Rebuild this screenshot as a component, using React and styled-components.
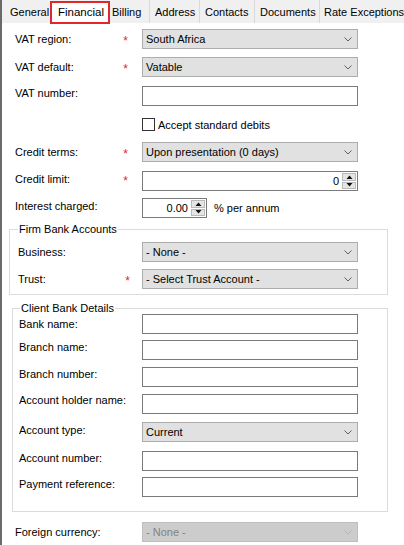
import React from 'react';
import styled, { createGlobalStyle } from 'styled-components';

const GlobalStyle = createGlobalStyle`
  html, body { margin: 0; padding: 0; background: #ffffff; }
  body {
    font-family: "Liberation Sans", Arial, sans-serif;
    font-size: 11px;
    color: #000000;
  }
  * { box-sizing: border-box; }
`;

const Page = styled.div`
  width: 404px;
  height: 545px;
  border-left: 2px solid #6a6a6a;
  background: #ffffff;
  overflow: hidden;
`;

const TabBar = styled.div`
  display: flex;
  height: 23px;
  padding-left: 6px;
  background: #f0f0f0;
`;

const Tab = styled.div`
  flex: none;
  width: ${p => p.$w}px;
  height: 23px;
  margin-top: ${p => (p.$active ? 1 : 0)}px;
  padding-left: ${p => p.$pl}px;
  line-height: ${p => (p.$active ? 18 : 25)}px;
  white-space: nowrap;
  background: ${p => (p.$active ? '#ffffff' : '#f0f0f0')};
  border: ${p => (p.$active ? '2px solid #e2262c' : 'none')};
  border-left: ${p => (p.$active ? '2px solid #e2262c' : p.$sep ? '1px solid #d9d9d9' : 'none')};
  font-size: ${p => (p.$active ? 11.5 : 11)}px;
`;

const Form = styled.div`
  display: flex;
  flex-direction: column;
  width: 356px;
  padding-left: 13px;
`;

const Row = styled.div`
  display: grid;
  grid-template-columns: 1fr 216px;
  align-items: center;
  height: ${p => p.$h || 20}px;
  margin-top: ${p => p.$mt}px;
`;

const LabelCell = styled.div`
  display: flex;
  align-items: center;
  justify-content: space-between;
  white-space: nowrap;
  position: relative;
  top: ${p => p.$shift || 0}px;
`;

const Star = styled.span`
  color: #e8252b;
  font-size: 12px;
  line-height: 12px;
  margin-right: ${p => p.$mr || 14}px;
  transform: translateY(2px);
`;

const Select = styled.div`
  display: flex;
  align-items: center;
  justify-content: space-between;
  height: 20px;
  padding: 0 5px 0 3px;
  border: 1px solid ${p => (p.$disabled ? '#bfbfbf' : '#adadad')};
  background: ${p => (p.$disabled ? '#cccccc' : '#e1e1e1')};
  color: ${p => (p.$disabled ? '#838383' : '#000000')};
  white-space: nowrap;
`;

const TextBox = styled.div`
  display: flex;
  align-items: center;
  justify-content: flex-end;
  width: ${p => (p.$w ? `${p.$w}px` : '100%')};
  height: 20px;
  padding: 0 1px 0 3px;
  border: 1px solid #7a7a7a;
  background: #ffffff;
`;

const NumValue = styled.span`
  margin-right: 3px;
`;

const Spin = styled.div`
  display: flex;
  flex-direction: column;
  gap: 1px;
  width: 14px;
  height: 16px;
`;

const SpinButton = styled.div`
  display: flex;
  align-items: center;
  justify-content: center;
  flex: 1;
  background: #e5e5e5;
  border: 1px solid #b9b9b9;
`;

const Inline = styled.div`
  display: flex;
  align-items: center;
  gap: ${p => p.$gap || 3}px;
  white-space: nowrap;
`;

const CheckBox = styled.span`
  display: inline-block;
  width: 13px;
  height: 13px;
  border: 1px solid #333333;
  background: #ffffff;
`;

const Group = styled.fieldset`
  margin: ${p => p.$mt}px 0 0 ${p => p.$ml}px;
  width: ${p => p.$w}px;
  padding: ${p => p.$pt}px 29px ${p => p.$pb}px ${p => p.$pl}px;
  border: 1px solid #dcdcdc;
  min-width: 0;
`;

const Legend = styled.legend`
  padding: 0 1px;
  margin-left: ${p => p.$ml}px;
  line-height: 12px;
  font-size: 11px;
`;

const Chevron = ({ color = '#606060' }) => (
  <svg width="8" height="5" viewBox="0 0 8 5">
    <polyline points="0.5,0.5 4,4 7.5,0.5" fill="none" stroke={color} strokeWidth="1" />
  </svg>
);

const Arrow = ({ up }) => (
  <svg width="7" height="4" viewBox="0 0 7 4">
    <polygon points={up ? '0.5,4 3.5,0.5 6.5,4' : '0.5,0 3.5,3.5 6.5,0'} fill="#111" />
  </svg>
);

const Spinner = () => (
  <Spin>
    <SpinButton><Arrow up /></SpinButton>
    <SpinButton><Arrow /></SpinButton>
  </Spin>
);

const Field = ({ label, req, mr, mt, h, shift, children }) => (
  <Row $mt={mt} $h={h}>
    <LabelCell $shift={shift}>
      <span>{label}</span>
      {req && <Star $mr={mr}>*</Star>}
    </LabelCell>
    {children}
  </Row>
);

const Drop = ({ value, disabled }) => (
  <Select $disabled={disabled}>
    <span>{value}</span>
    <Chevron color={disabled ? '#b5b5b5' : '#606060'} />
  </Select>
);

const tabs = [
  { t: 'General', w: 42, pl: 2 },
  { t: 'Financial', w: 60, pl: 6, active: true },
  { t: 'Billing', w: 39, pl: 2 },
  { t: 'Address', w: 50, pl: 5, sep: true },
  { t: 'Contacts', w: 55, pl: 5, sep: true },
  { t: 'Documents', w: 65, pl: 5, sep: true },
  { t: 'Rate Exceptions', w: 85, pl: 4, sep: true },
];

export default function App() {
  return (
    <>
      <GlobalStyle />
      <Page>
        <TabBar>
          {tabs.map(tb => (
            <Tab key={tb.t} $w={tb.w} $pl={tb.pl} $active={tb.active} $sep={tb.sep}>
              {tb.t}
            </Tab>
          ))}
        </TabBar>
        <Form>
          <Field label="VAT region:" req mt={6}><Drop value="South Africa" /></Field>
          <Field label="VAT default:" req mt={8}><Drop value="Vatable" /></Field>
          <Field label="VAT number:" mt={9} shift={-3}><TextBox /></Field>
          <Field label="" mt={12} h={13}>
            <Inline>
              <CheckBox />
              <span>Accept standard debits</span>
            </Inline>
          </Field>
          <Field label="Credit terms:" req mt={11}><Drop value="Upon presentation (0 days)" /></Field>
          <Field label="Credit limit:" req mt={9} shift={-2}>
            <TextBox>
              <NumValue>0</NumValue>
              <Spinner />
            </TextBox>
          </Field>
          <Field label="Interest charged:" mt={7} shift={-2}>
            <Inline $gap={7}>
              <TextBox $w={65}>
                <NumValue>0.00</NumValue>
                <Spinner />
              </TextBox>
              <span>% per annum</span>
            </Inline>
          </Field>

          <Group $mt={5} $ml={-6} $w={379} $pt={7} $pb={5} $pl={8}>
            <Legend $ml={0}>Firm Bank Accounts</Legend>
            <Field label="Business:" mt={0}><Drop value="- None -" /></Field>
            <Field label="Trust:" req mr={12} mt={7}><Drop value="- Select Trust Account -" /></Field>
          </Group>

          <Group $mt={7} $ml={-3} $w={376} $pt={0} $pb={14} $pl={6}>
            <Legend $ml={1}>Client Bank Details</Legend>
            <Field label="Bank name:" mt={0}><TextBox /></Field>
            <Field label="Branch name:" mt={6} shift={-3}><TextBox /></Field>
            <Field label="Branch number:" mt={7} shift={-3}><TextBox /></Field>
            <Field label="Account holder name:" mt={7} shift={-4}><TextBox /></Field>
            <Field label="Account type:" mt={8} shift={-2}><Drop value="Current" /></Field>
            <Field label="Account number:" mt={9} shift={-3}><TextBox /></Field>
            <Field label="Payment reference:" mt={6} shift={-3}><TextBox /></Field>
          </Group>

          <Field label="Foreign currency:" mt={10}><Drop value="- None -" disabled /></Field>
        </Form>
      </Page>
    </>
  );
}
